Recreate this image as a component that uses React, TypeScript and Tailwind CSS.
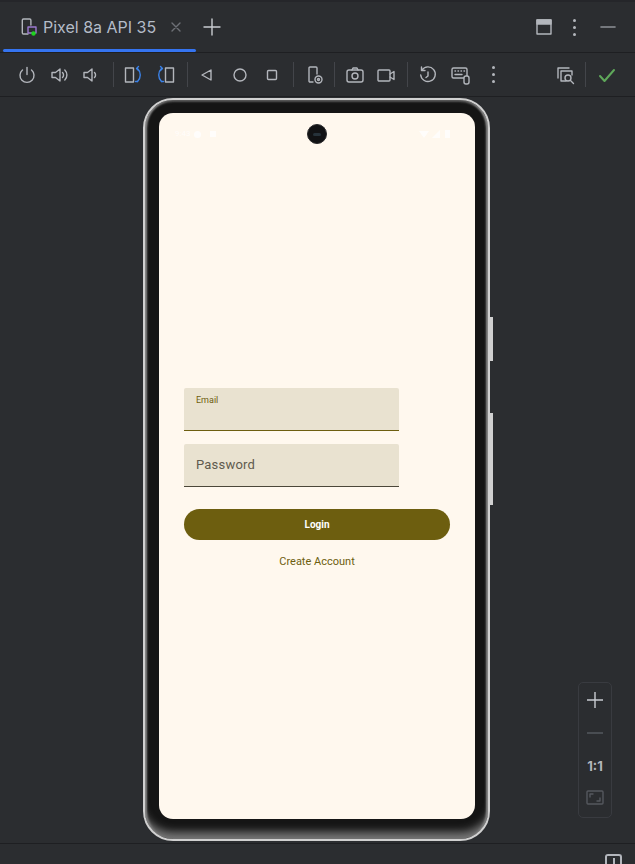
import React from "react";

const Ico: React.FC<{ w?: number; h?: number; className?: string; children: React.ReactNode }> = ({
  w = 20,
  h = 20,
  className = "",
  children,
}) => (
  <svg
    width={w}
    height={h}
    viewBox={`0 0 ${w} ${h}`}
    fill="none"
    stroke="#b3b6bc"
    strokeWidth="1.4"
    strokeLinecap="round"
    strokeLinejoin="round"
    className={`shrink-0 ${className}`}
  >
    {children}
  </svg>
);

const Sep: React.FC<{ className: string }> = ({ className }) => (
  <div className={`w-px h-[25px] bg-[#43454a] shrink-0 ${className}`} />
);

const Dots: React.FC<{ className?: string }> = ({ className = "" }) => (
  <div className={`flex flex-col gap-[4px] items-center w-[4px] shrink-0 ${className}`}>
    <div className="w-[3px] h-[3px] rounded-full bg-[#b3b6bc]" />
    <div className="w-[3px] h-[3px] rounded-full bg-[#b3b6bc]" />
    <div className="w-[3px] h-[3px] rounded-full bg-[#b3b6bc]" />
  </div>
);

const TabBar = () => (
  <div className="h-[53px] border-b border-[#1e1f22] border-t-2 border-t-[#25262a] relative flex items-center">
    <Ico className="ml-[20px]" w={18} h={20}>
      <path d="M8 17H3.500a1.200 1.200 0 0 1-1.200-1.200V3.200A1.200 1.200 0 0 1 3.500 2h6.200a1.200 1.200 0 0 1 1.200 1.200V8" />
      <rect x="8" y="10" width="8" height="6" stroke="#9c7ad0" />
      <circle cx="13.500" cy="16.500" r="2.200" fill="#1fd31f" stroke="none" />
    </Ico>
    <span className="ml-[5px] text-[16px] leading-none text-[#b4bcc8] font-['Inter',sans-serif] whitespace-nowrap">
      Pixel 8a API 35
    </span>
    <Ico className="ml-[14px]" w={12} h={12}>
      <path d="M2 2l8 8M10 2l-8 8" stroke="#6d7076" />
    </Ico>
    <Ico className="ml-[21px]" w={18} h={18}>
      <path d="M9 1v16M1 9h16" stroke="#c9ccd1" />
    </Ico>
    <Ico className="ml-auto" w={16} h={16}>
      <rect x="1" y="1" width="14" height="14" />
      <rect x="1" y="1" width="14" height="4" fill="#b3b6bc" />
    </Ico>
    <Dots className="ml-[20px]" />
    <Ico className="ml-[24px] mr-[19px]" w={16} h={4}>
      <path d="M1 2h14" strokeWidth="1.600" stroke="#8e9197" />
    </Ico>
    <div className="absolute left-[3px] bottom-0 w-[193px] h-[3px] bg-[#3574f0] rounded-full" />
  </div>
);

const ToolBar = () => (
  <div className="h-[44px] border-b border-[#1e1f22] flex items-center">
    <Ico className="ml-[17px]">
      <path d="M10 2.500v7" />
      <path d="M5.500 5a7 7 0 1 0 9 0" />
    </Ico>
    <Ico className="ml-[13px]">
      <path d="M2 7.500h3.500L10 4v12l-4.500-3.500H2z" />
      <path d="M12.500 7.500a3.500 3.500 0 0 1 0 5M14.800 5a7 7 0 0 1 0 10" />
    </Ico>
    <Ico className="ml-[11px]">
      <path d="M3 7.500h3.500L11 4v12l-4.500-3.500H3z" />
      <path d="M13.500 7.500a3.500 3.500 0 0 1 0 5" />
    </Ico>
    <Sep className="ml-[12px]" />
    <Ico className="ml-[10px]">
      <rect x="1.500" y="3" width="8" height="14" />
      <path d="M13.500 3.500a9 9 0 0 1 0 13" stroke="#3b82e8" />
      <path d="M14.500 1.500l-2 2 2 2" stroke="#3b82e8" />
      <path d="M13.500 16.500h-2" stroke="#3b82e8" />
    </Ico>
    <Ico className="ml-[11px]">
      <rect x="10.500" y="3" width="8" height="14" />
      <path d="M6.500 3.500a9 9 0 0 0 0 13" stroke="#3b82e8" />
      <path d="M5.500 1.500l2 2-2 2" stroke="#3b82e8" />
      <path d="M6.500 16.500h2" stroke="#3b82e8" />
    </Ico>
    <Sep className="ml-[12px]" />
    <Ico className="ml-[8px]">
      <path d="M15 5l-9 5 9 5z" />
    </Ico>
    <Ico className="ml-[14px]">
      <circle cx="10" cy="10" r="6" />
    </Ico>
    <Ico className="ml-[12px]">
      <rect x="5.500" y="5.500" width="9" height="9" rx="1" />
    </Ico>
    <Sep className="ml-[11px]" />
    <Ico className="ml-[11px]">
      <path d="M8 17H5a1 1 0 0 1-1-1V3a1 1 0 0 1 1-1h6a1 1 0 0 1 1 1v6" />
      <circle cx="13.500" cy="14.500" r="3.500" />
      <circle cx="13.500" cy="14.500" r="1" />
    </Ico>
    <Sep className="ml-[9px]" />
    <Ico className="ml-[10px]">
      <rect x="2" y="5" width="16" height="12" rx="2" />
      <circle cx="10" cy="11" r="3" />
      <path d="M7 5l1-2h4l1 2" />
    </Ico>
    <Ico className="ml-[11px]">
      <rect x="2" y="5" width="12" height="11" rx="1" />
      <path d="M14 9l4-2.500v8L14 12" />
    </Ico>
    <Sep className="ml-[11px]" />
    <Ico className="ml-[10px]">
      <path d="M4 5a7.300 7.300 0 1 1-1.300 5" />
      <path d="M3.500 2v3.500H7" />
      <path d="M10 7v4l-2 1.500" />
    </Ico>
    <Ico className="ml-[12px]">
      <rect x="2" y="3" width="15" height="10" rx="1.500" />
      <path d="M5 6h.5M8 6h.5M11 6h.5M14 6h.5M5 9.500h7" />
      <rect x="14" y="11" width="5" height="8" rx="2" fill="#2b2d30" />
    </Ico>
    <Dots className="ml-[21px]" />
    <Ico className="ml-auto">
      <path d="M3 13V3h11" />
      <path d="M11 16H6V6h11v4" />
      <circle cx="13" cy="13" r="3" />
      <path d="M15.500 15.500L18.500 18.500" />
    </Ico>
    <Sep className="ml-[10px]" />
    <Ico className="ml-[11px] mr-[18px]">
      <path d="M3 11l4.500 5L17 5" stroke="#5fa85a" strokeWidth="2" />
    </Ico>
  </div>
);

const Screen = () => (
  <div className="w-[316px] h-[706px] rounded-[14px] bg-[#fff8ee] relative flex flex-col items-center font-['Roboto',sans-serif]">
    <div className="w-full h-[42px] flex items-center justify-between pl-[16px] pr-[24px] text-white opacity-80">
      <div className="flex items-center gap-[4px] text-[8px]">
        <span>9:43</span>
        <div className="w-[7px] h-[7px] rounded-full bg-white" />
        <div className="w-[6px] h-[6px] bg-white ml-[5px]" />
      </div>
      <svg width="32" height="10" viewBox="0 0 32 10" fill="#ffffff">
        <path d="M0 2h10l-5 7z" />
        <path d="M21 1v8h-8z" />
        <rect x="26" y="1" width="5" height="8" />
      </svg>
    </div>

    <div className="absolute top-[11px] left-[148px] w-[20px] h-[20px] rounded-full bg-[#111214] border border-[#2a2a2c] flex items-center justify-center">
      <div className="w-[8px] h-[3px] rounded-full bg-[#26323a]" />
    </div>

    <div className="mt-[233px] w-[266px]">
      <div className="w-[215px] h-[43px] bg-[#e9e2d0] rounded-t-[2px] border-b border-[#6d5e0f] px-[12px] pt-[7px]">
        <div className="text-[9px] leading-[11px] text-[#6d5e0f]">Email</div>
      </div>
      <div className="mt-[13px] w-[215px] h-[43px] bg-[#e9e2d0] rounded-t-[2px] border-b border-[#4b4739] px-[12px] flex items-center">
        <div className="text-[13px] tracking-[0.2px] text-[#5f5b4e]">Password</div>
      </div>
      <div className="mt-[22px] h-[31px] rounded-full bg-[#6d5e0f] flex items-center justify-center text-[10px] font-bold text-white">
        Login
      </div>
      <div className="mt-[16px] text-center text-[11px] leading-[12px] text-[#6d5e0f]">
        Create Account
      </div>
    </div>
  </div>
);

const Phone = () => (
  <div className="relative mt-px w-[347px] h-[743px] ml-[143px]">
    <div className="w-full h-full rounded-[30px] border-[2px] border-[#d0d0d0] bg-[#151515] shadow-[inset_0_-12px_8px_-5px_#777,inset_3px_0_2px_-1px_#8a8a8a,inset_-3px_0_2px_-1px_#8a8a8a,inset_0_2px_2px_#555] pl-[14px] pt-[13px]">
      <Screen />
    </div>
    <div className="absolute left-[347px] top-[219px] w-[3px] h-[44px] bg-[#d0d0d0]" />
    <div className="absolute left-[347px] top-[315px] w-[3px] h-[92px] bg-[#d0d0d0]" />
  </div>
);

const ZoomPanel = () => (
  <div className="absolute left-[578px] top-[682px] w-[34px] h-[136px] rounded-[5px] border border-[#393b40] flex flex-col items-center pt-[9px]">
    <Ico w={16} h={16}>
      <path d="M8 0v16M0 8h16" stroke="#c9ccd1" />
    </Ico>
    <Ico className="mt-[24px]" w={16} h={2}>
      <path d="M0 1h16" stroke="#55585e" />
    </Ico>
    <div className="mt-[25px] text-[13px] leading-[14px] font-bold text-[#b3b6bc] font-['Inter',sans-serif]">1:1</div>
    <Ico className="mt-[17px]" w={18} h={16}>
      <rect x="1" y="1" width="16" height="13" rx="1" stroke="#55585e" />
      <path d="M4 7V4h3M14 8v3h-3" stroke="#55585e" />
    </Ico>
  </div>
);

export default function App() {
  return (
    <div className="relative w-[635px] h-[864px] overflow-hidden bg-[#2b2d30] flex flex-col">
      <TabBar />
      <ToolBar />
      <div className="flex-1 min-h-0">
        <Phone />
      </div>
      <div className="h-[21px] border-t border-[#1e1f22] flex justify-end pr-[13px] pt-[10px]">
        <div className="w-[17px] h-[14px] rounded-t-[3px] border-[2px] border-b-0 border-[#b3b6bc] flex justify-center">
          <div className="w-[2px] h-[6px] bg-[#b3b6bc] mt-[2px]" />
        </div>
      </div>
      <ZoomPanel />
    </div>
  );
}
